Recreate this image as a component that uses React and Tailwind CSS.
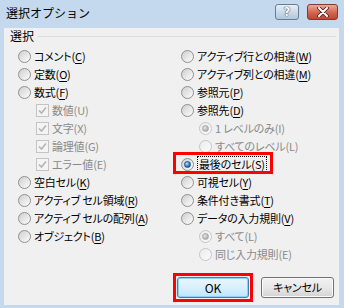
import React from "react"

const jp = "font-['Meiryo_UI','Noto_Sans_CJK_JP','Noto_Sans_CJK_SC',sans-serif]"

function Radio({ checked, disabled }) {
  return (
    <span
      className={`w-[13px] h-[13px] shrink-0 rounded-full border flex items-center justify-center ${
        disabled
          ? "border-[#c6c6c6] bg-linear-to-br from-[#ececec] to-[#fbfbfb]"
          : "border-[#8e8f8f] bg-linear-to-br from-[#cfcfcf] to-[#fdfdfd]"
      }`}
    >
      {checked && (
        <span
          className={`w-[7px] h-[7px] rounded-full ${
            disabled
              ? "bg-[radial-gradient(circle_at_35%_35%,#e6e6e6,#9a9a9a)] border border-[#a8a8a8]"
              : "bg-[radial-gradient(circle_at_35%_30%,#b8e4ff,#2a78c8_60%,#123f7a)] border border-[#1d4f8a]"
          }`}
        />
      )}
    </span>
  )
}

function Check() {
  return (
    <span className="w-[13px] h-[13px] shrink-0 border border-[#c4c4c4] bg-[#f4f4f4] flex items-center justify-center">
      <svg width="9" height="9" viewBox="0 0 9 9">
        <path d="M1 4.5 L3.5 7 L8 1.5" fill="none" stroke="#b4b4b4" strokeWidth="1.6" />
      </svg>
    </span>
  )
}

function Label({ text, k, disabled }) {
  return (
    <span className={`text-[11px] leading-[16px] tracking-[-0.2px] whitespace-nowrap [font-feature-settings:'palt'] ${disabled ? "text-[#8a8a8a]" : "text-black"}`}>
      {text}(
      {disabled ? k : <span className="underline underline-offset-[2px]">{k}</span>}
      )
    </span>
  )
}

function RadioRow({ text, k, checked, disabled, indent }) {
  return (
    <div className={`h-[18px] flex items-center gap-[3px] ${indent ? "ml-[18px]" : ""}`}>
      <Radio checked={checked} disabled={disabled} />
      <Label text={text} k={k} disabled={disabled} />
    </div>
  )
}

function CheckRow({ text, k }) {
  return (
    <div className="h-[18px] flex items-center gap-[3px] ml-[18px]">
      <Check />
      <Label text={text} k={k} disabled />
    </div>
  )
}

export default function App() {
  return (
    <div className={`w-[344px] h-[308px] bg-[#c4d8ee] flex flex-col overflow-hidden ${jp}`}>
      {/* Title bar */}
      <div className="h-[28px] flex shrink-0">
        <span className="pl-[6px] pt-[5px] text-[12px] leading-[16px] text-black">選択オプション</span>
        <div className="ml-auto mr-[6px] mt-[4px] flex gap-[8px]">
          <div className="w-[24px] h-[16px] rounded-[3px] border border-[#6c7d92] bg-linear-to-b from-[#e8eff8] via-[#cbdaea] to-[#b2c7df] flex items-center justify-center">
            <span className="text-white font-bold text-[12px] leading-[12px] font-['DejaVu_Sans',sans-serif] [text-shadow:0_0_1px_#333,0_0_1px_#333]">?</span>
          </div>
          <div className="w-[31px] h-[16px] rounded-[3px] border border-[#7c3b33] bg-linear-to-b from-[#e9a99a] via-[#d36a55] to-[#c1432e] flex items-center justify-center">
            <svg width="12" height="10" viewBox="0 0 12 10">
              <path d="M2 1 L10 9 M10 1 L2 9" stroke="#4a1a14" strokeWidth="3.6" strokeLinecap="round" />
              <path d="M2 1 L10 9 M10 1 L2 9" stroke="#ffffff" strokeWidth="2" strokeLinecap="round" />
            </svg>
          </div>
        </div>
      </div>

      {/* Client area */}
      <div className="flex-1 ml-[4px] mr-[5px] mb-[3px] bg-[#f0f0f0] flex flex-col">
        <div className="h-[16px] flex items-center pl-[6px] pr-[3px] gap-[4px]">
          <span className="text-[12px] leading-[16px] text-black">選択</span>
          <div className="flex-1 h-px bg-[#d5dfe5]" />
        </div>

        <div className="mt-[3px] pl-[14px] grid grid-cols-[163px_1fr]">
          <div className="flex flex-col">
            <RadioRow text="コメント" k="C" />
            <RadioRow text="定数" k="O" />
            <RadioRow text="数式" k="F" />
            <CheckRow text="数値" k="U" />
            <CheckRow text="文字" k="X" />
            <CheckRow text="論理値" k="G" />
            <CheckRow text="エラー値" k="E" />
            <RadioRow text="空白セル" k="K" />
            <RadioRow text="アクティブ セル領域" k="R" />
            <RadioRow text="アクティブ セルの配列" k="A" />
            <RadioRow text="オブジェクト" k="B" />
          </div>
          <div className="flex flex-col">
            <RadioRow text="アクティブ行との相違" k="W" />
            <RadioRow text="アクティブ列との相違" k="M" />
            <RadioRow text="参照元" k="P" />
            <RadioRow text="参照先" k="D" />
            <RadioRow text="1 レベルのみ" k="I" disabled checked indent />
            <RadioRow text="すべてのレベル" k="L" disabled indent />
            <div className="relative h-[18px] flex items-center gap-[3px]">
              <Radio checked />
              <span className="border border-dotted border-black px-px text-[11px] leading-[14px] tracking-[-0.2px] whitespace-nowrap [font-feature-settings:'palt']">
                最後のセル(<span className="underline underline-offset-[2px]">S</span>)
              </span>
              <span className="absolute left-[-8px] top-[-3px] bottom-[-1px] w-[100px] border-[3px] border-[#ff0000]" />
            </div>
            <RadioRow text="可視セル" k="Y" />
            <RadioRow text="条件付き書式" k="T" />
            <RadioRow text="データの入力規則" k="V" />
            <RadioRow text="すべて" k="L" disabled checked indent />
            <RadioRow text="同じ入力規則" k="E" disabled indent />
          </div>
        </div>

        <div className="mt-auto mb-[7px] pr-[5px] flex justify-end gap-[12px]">
          <div className="relative">
            <button className="w-[72px] h-[21px] rounded-[3px] border border-[#3c7fb1] bg-linear-to-b from-[#eaf6fd] via-[#d9f0fc] to-[#bee6fd] shadow-[inset_0_0_0_1px_#8fd1f3] text-[12px] text-black flex items-center justify-center">
              OK
            </button>
            <span className="absolute -inset-[4px] border-[3px] border-[#ff0000]" />
          </div>
          <button className="w-[73px] h-[21px] rounded-[3px] border border-[#707070] bg-linear-to-b from-[#f2f2f2] via-[#e8e8e8] to-[#d3d3d3] shadow-[inset_0_0_0_1px_#fbfbfb] text-[11px] tracking-[-0.2px] text-black flex items-center justify-center [font-feature-settings:'palt']">
            キャンセル
          </button>
        </div>
      </div>
    </div>
  )
}
